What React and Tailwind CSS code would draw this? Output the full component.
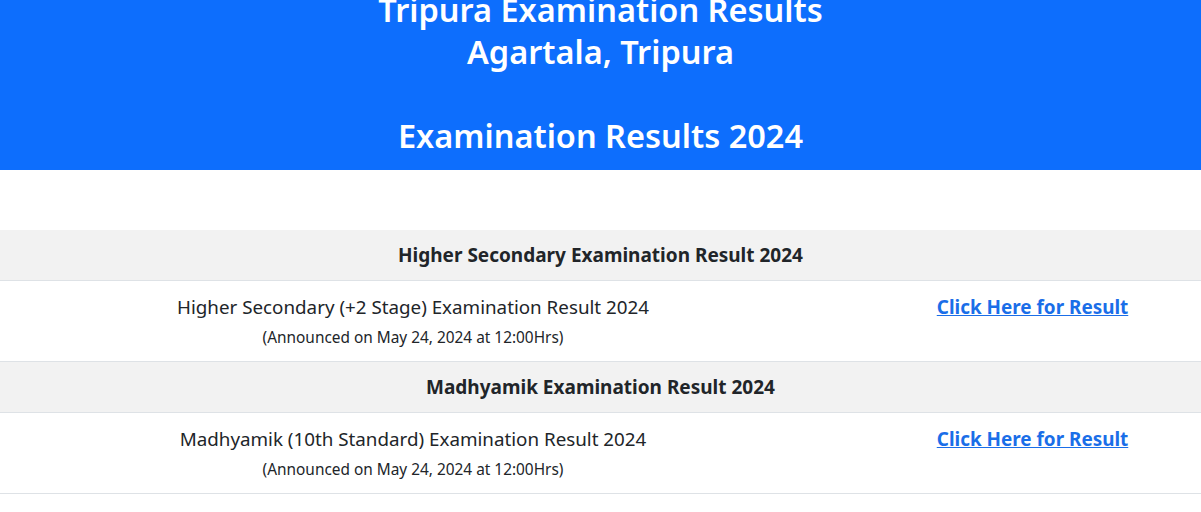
export default function App() {
  const sections = [
    {
      title: "Higher Secondary Examination Result 2024",
      item: "Higher Secondary (+2 Stage) Examination Result 2024",
    },
    {
      title: "Madhyamik Examination Result 2024",
      item: "Madhyamik (10th Standard) Examination Result 2024",
    },
  ];

  return (
    <div
      className="min-h-[512px] overflow-hidden bg-white text-[#212529]"
      style={{ fontFamily: '"Noto Sans", "Open Sans", sans-serif' }}
    >
      <header className="-mt-[11px] bg-[#0d6efd] pb-[13px] text-center text-[32.5px] font-semibold leading-[42px] text-white">
        <div>Tripura Examination Results</div>
        <div>Agartala, Tripura</div>
        <div>&nbsp;</div>
        <div>Examination Results 2024</div>
      </header>

      <div className="mt-[60px]">
        {sections.map((s) => (
          <div key={s.title}>
            <div className="flex h-[51px] items-center justify-center border-b border-[#dee2e6] bg-[#f2f2f2] text-[19px] font-bold">
              {s.title}
            </div>
            <div className="grid h-[81px] grid-cols-[826px_1fr] border-b border-[#dee2e6]">
              <div className="flex flex-col items-center pt-[14px]">
                <div className="text-[18.8px] leading-[24px]">{s.item}</div>
                <div className="mt-[8px] text-[15.4px] leading-[22px]">
                  (Announced on May 24, 2024 at 12:00Hrs)
                </div>
              </div>
              <div className="pl-[38px] pt-[14px] text-center">
                <a
                  href="#"
                  className="text-[18.9px] font-bold leading-[24px] text-[#1a6ee8] underline"
                >
                  Click Here for Result
                </a>
              </div>
            </div>
          </div>
        ))}
      </div>
    </div>
  );
}
